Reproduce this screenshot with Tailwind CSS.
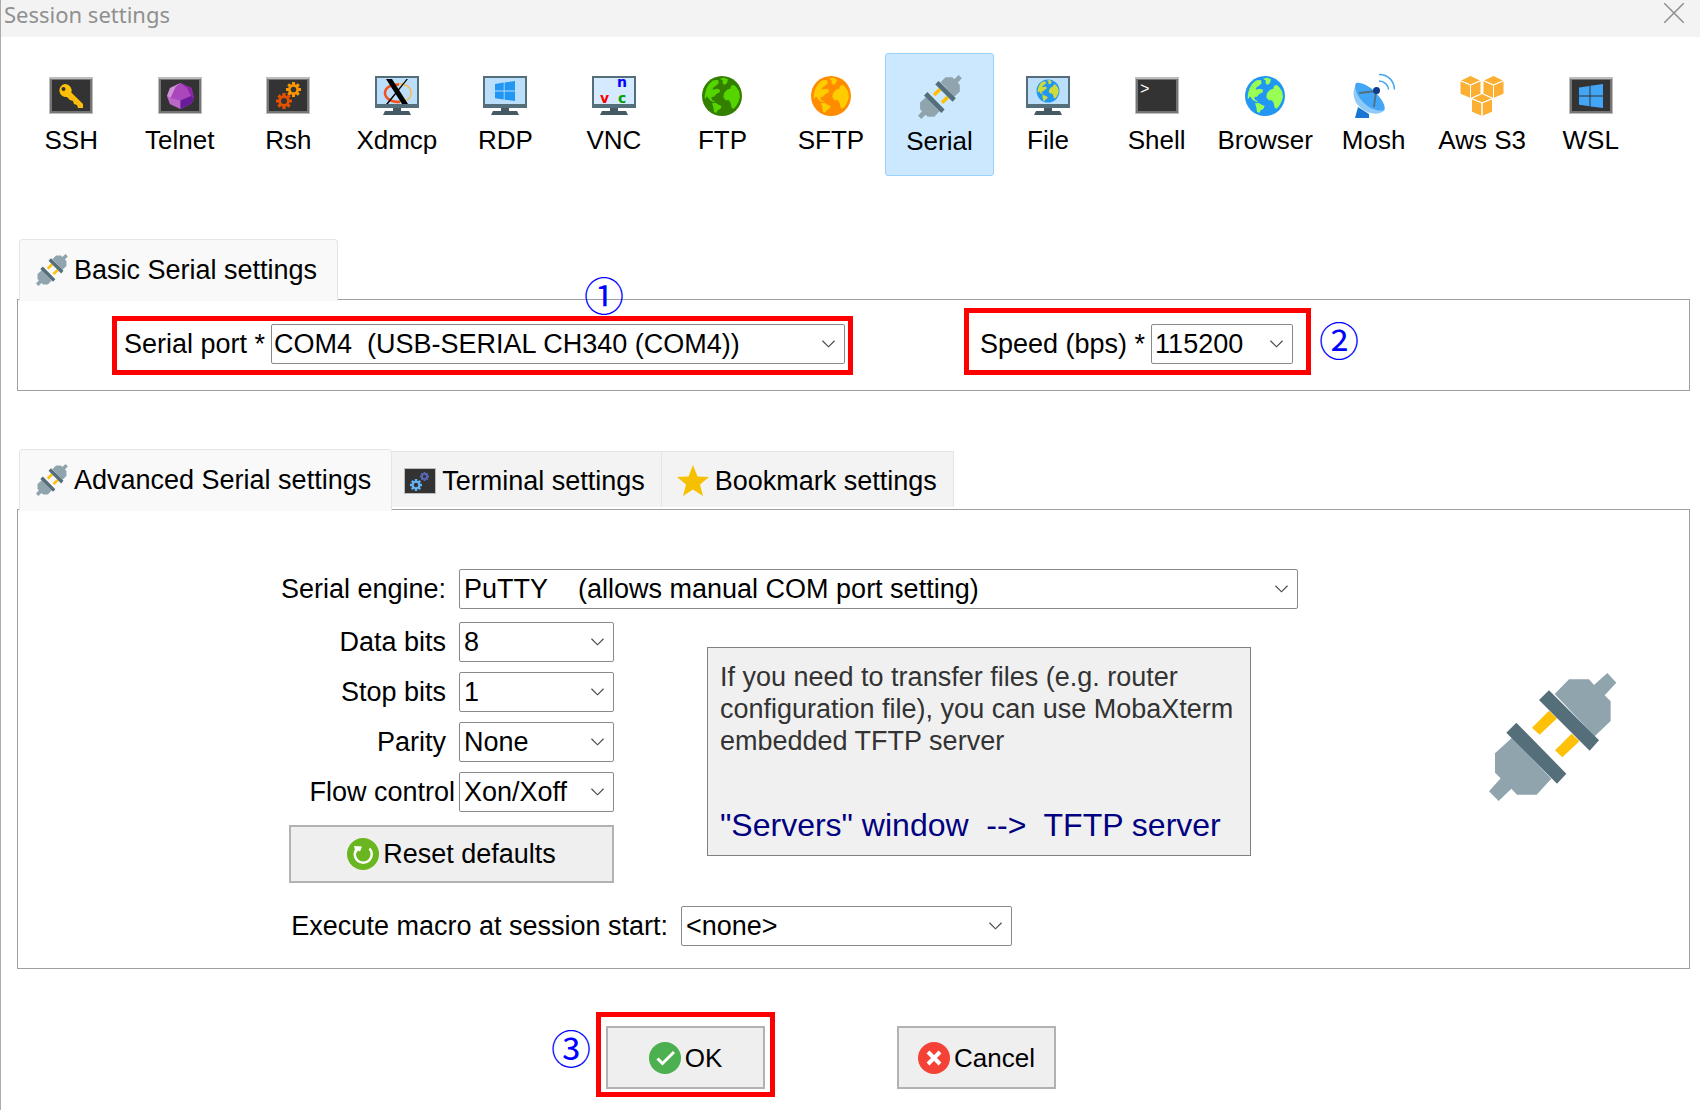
<!DOCTYPE html>
<html lang="en">
<head>
  <meta charset="UTF-8">
  <meta name="viewport" content="width=device-width, initial-scale=1.0">
  <title>Session settings</title>
  <script src="https://cdn.jsdelivr.net/npm/@tailwindcss/browser@4"></script>
</head>
<body class="bg-white min-h-screen border-l border-[#ababab] font-['Liberation_Sans',Arial,sans-serif] text-[27px] leading-8 text-black">

  <!-- Shared icon shapes -->
  <svg class="hidden" aria-hidden="true">
    <symbol id="plug" viewBox="0 0 384 384">
      <path fill="#90a4ae" d="M240 19h60l15 17 40-36 27 29-35 38 18 18v59l-48 46L197 63zM69 194l118 123-44 48H84l-17-18-38 37-29-29 35-39-17-17v-58z"/>
      <path fill="#ffc107" d="M180 113l24 23-52 49-23-21zM248 182l23 23-51 48-22-21z"/>
      <path fill="#546e7a" d="M180 52l150 150-28 31L150 81zM82 149l150 153-28 30L52 179z"/>
    </symbol>
    <symbol id="terminal" viewBox="0 0 48 48">
      <path fill="#bdbdbd" d="M2 5h44v37H2z"/>
      <path fill="#757575" d="M3 7h42v34H3z"/>
      <path fill="#333" d="M5 8h38v31H5z"/>
    </symbol>
    <symbol id="monitor" viewBox="0 0 48 48">
      <path fill="#455a64" d="M20 35h8v4h8l2 4H10l2-4h8z"/>
      <path fill="#546e7a" d="M2 4h44v32H2z"/>
      <path fill="#bbdefb" d="M4 6h40v26H4z"/>
    </symbol>
    <symbol id="land" viewBox="0 0 120 120">
      <path d="M8 62C10 38 22 18 36 13l12-1 2 10-8 7-9 6-1 6 13-3 9 3-1 8-10 5-7 8-8 1 2 9 9 4-3 3-12-6-9-12-6 9zM54 8l12-3 12 5-3 11-7 6-7-6 2-7zM30 82l12-1 8 5 9 4-4 9-8 4-4 8-7-4-2-13zM94 26l8 6 9 14 3 16-4 14-7 13-8 9-6-3-3-14-5-8-10 0-7-9 2-12 9-11 10-3 2-8z"/>
    </symbol>
    <symbol id="gear" viewBox="0 0 20 20">
      <circle cx="10" cy="10" r="5.500" fill="none" stroke="currentColor" stroke-width="3.500"/>
      <path stroke="currentColor" stroke-width="4" d="M10 0v4M10 16v4M0 10h4M16 10h4M3 3l2.500 2.500M14.500 14.500L17 17M17 3l-2.500 2.500M5.500 14.500L3 17"/>
    </symbol>
    <symbol id="windows" viewBox="0 0 24 24">
      <path d="M0 3.5l10.500-1.600v9.600H0zM11.500 1.700L24 0v11.500H11.500zM0 12.500h10.500v9.800L0 20.700zM11.500 12.500H24V24l-12.500-1.600z"/>
    </symbol>
    <symbol id="cube" viewBox="0 0 22 24">
      <path fill="#fbb034" stroke="#fff" d="M11 .5l10.500 5L11 10 .5 5.500zM.5 5.500L11 10v13.500L.5 19zM21.500 5.500L11 10v13.500L21.500 19z"/>
    </symbol>
    <symbol id="chevron" viewBox="0 0 14 8">
      <path d="M.5 .5L7 7l6.500-6.500" fill="none" stroke="#444" stroke-width="1.200"/>
    </symbol>
  </svg>

  <header class="flex h-[37px] items-start justify-between bg-[#f3f3f3] pl-[3px] pr-4">
    <h1 class="font-['Noto_Sans',sans-serif] text-[22px] leading-7 text-[#8f8f8f]">Session settings</h1>
    <button type="button" aria-label="Close" class="pt-[3px]">
      <svg class="size-5" viewBox="0 0 20 20" stroke="#8f8f8f" stroke-width="1.500"><path d="M0 0l20 20M20 0L0 20"/></svg>
    </button>
  </header>

  <!-- Session types -->
  <nav class="mt-4 ml-4 mr-[55px] grid grid-cols-15 text-[26px] leading-7">
    <button type="button" class="flex h-[123px] flex-col items-center gap-1.5 pt-[19px]">
      <svg class="size-12 shrink-0" viewBox="0 0 48 48">
        <use href="#terminal"/>
        <path fill="#ffc107" fill-rule="evenodd" d="M18 12a6.500 6.500 0 0 1 6.300 8.500L36 32v4h-5l-1-3-3-1-1-3-3-1-3-3a6.500 6.500 0 1 1-2-13zm-1.500 3a2 2 0 1 0 0 4 2 2 0 0 0 0-4z"/>
        <path stroke="#f9a825" d="M22 23l12 12"/>
      </svg>
      SSH
    </button>
    <button type="button" class="flex h-[123px] flex-col items-center gap-1.5 pt-[19px]">
      <svg class="size-12 shrink-0" viewBox="0 0 48 48">
        <use href="#terminal"/>
        <path fill="#ab47bc" d="M24.500 11l11 5 2.500 10-3 6-10.500 5L14 32l-3-8 3-8z"/>
        <path fill="#ce93d8" d="M24.500 11l-5 4-5 11-3.500-2 3-8z"/>
        <path fill="#ba68c8" d="M14.500 26l10 2.500V37L14 32l-3-8z"/>
        <path fill="#8e24aa" d="M24.500 11l11 5 2.500 10-3-2-4-8z"/>
        <path fill="#6a1b9a" d="M24.500 28.500L35 24l3 2-3 6-10.500 5z"/>
      </svg>
      Telnet
    </button>
    <button type="button" class="flex h-[123px] flex-col items-center gap-1.5 pt-[19px]">
      <svg class="size-12 shrink-0" viewBox="0 0 48 48">
        <use href="#terminal"/>
        <use href="#gear" x="22" y="10" width="15" height="15" class="text-[#ff9800]"/>
        <use href="#gear" x="12" y="21" width="16" height="16" class="text-[#e65100]"/>
      </svg>
      Rsh
    </button>
    <button type="button" class="flex h-[123px] flex-col items-center gap-1.5 pt-[19px]">
      <svg class="size-12 shrink-0" viewBox="0 0 48 48">
        <use href="#monitor"/>
        <path fill="none" stroke="#ffb74d" stroke-width="1.500" d="M24 12c8-1 14 3 14 9s-6 9-12 9"/>
        <path fill="none" stroke="#f4511e" stroke-width="2.500" d="M26 12.500c-8 0-14 3-14 8.500s6 9 15 9"/>
        <path d="M13 7h6l16 25h-6zM33.500 7H35L15 32h-2z"/>
      </svg>
      Xdmcp
    </button>
    <button type="button" class="flex h-[123px] flex-col items-center gap-1.5 pt-[19px]">
      <svg class="size-12 shrink-0" viewBox="0 0 48 48">
        <use href="#monitor"/>
        <use href="#windows" x="14" y="9" width="20" height="20" fill="#2196f3"/>
      </svg>
      RDP
    </button>
    <button type="button" class="flex h-[123px] flex-col items-center gap-1.5 pt-[19px]">
      <svg class="size-12 shrink-0 font-['DejaVu_Sans',sans-serif] text-[14px] font-bold" viewBox="0 0 48 48">
        <use href="#monitor"/>
        <path fill="#d6eaff" d="M4 6h40v26H4z"/>
        <text x="10" y="31" fill="#f00">v</text>
        <text x="28" y="31" fill="#00a000">c</text>
        <text x="27" y="15" fill="#00f">n</text>
      </svg>
      VNC
    </button>
    <button type="button" class="flex h-[123px] flex-col items-center gap-1.5 pt-[19px]">
      <svg class="size-12 shrink-0" viewBox="0 0 48 48">
        <circle cx="24" cy="24" r="20" fill="#338000"/>
        <use href="#land" x="4" y="4" width="40" height="40" fill="#55d400"/>
      </svg>
      FTP
    </button>
    <button type="button" class="flex h-[123px] flex-col items-center gap-1.5 pt-[19px]">
      <svg class="size-12 shrink-0" viewBox="0 0 48 48">
        <circle cx="24" cy="24" r="20" fill="#ff8c00"/>
        <use href="#land" x="4" y="4" width="40" height="40" fill="#ffcc00"/>
      </svg>
      SFTP
    </button>
    <button type="button" aria-current="true" class="flex h-[123px] flex-col items-center gap-1.5 rounded-[3px] border border-[#99d1ff] bg-[#cce8ff] pt-[19px]">
      <svg class="size-12 shrink-0" viewBox="0 0 48 48"><use href="#plug" x="2" y="2" width="44" height="44"/></svg>
      Serial
    </button>
    <button type="button" class="flex h-[123px] flex-col items-center gap-1.5 pt-[19px]">
      <svg class="size-12 shrink-0" viewBox="0 0 48 48">
        <use href="#monitor"/>
        <circle cx="24" cy="19" r="11.500" fill="#2196f3"/>
        <use href="#land" x="12" y="7" width="24" height="24" fill="#cddc39"/>
      </svg>
      File
    </button>
    <button type="button" class="flex h-[123px] flex-col items-center gap-1.5 pt-[19px]">
      <svg class="size-12 shrink-0 font-['Liberation_Mono',monospace] text-[16px]" viewBox="0 0 48 48">
        <use href="#terminal"/>
        <text x="7" y="22" fill="#fff">&gt;</text>
      </svg>
      Shell
    </button>
    <button type="button" class="flex h-[123px] flex-col items-center gap-1.5 pt-[19px]">
      <svg class="size-12 shrink-0" viewBox="0 0 48 48">
        <circle cx="24" cy="24" r="20" fill="#2196f3"/>
        <use href="#land" x="4" y="4" width="40" height="40" fill="#99ff55"/>
      </svg>
      Browser
    </button>
    <button type="button" class="flex h-[123px] flex-col items-center gap-1.5 pt-[19px]">
      <svg class="size-12 shrink-0" viewBox="0 0 48 48">
        <path fill="#1976d2" d="M8 35l11 7v4H5z"/>
        <path fill="#90caf9" d="M6 12C1 22 4 31 12 37s18 6 23 1z"/>
        <path fill="#42a5f5" d="M6 11c5-1 13 2 21 11 7 8 9 14 7 16-5 2-14-1-21-8S4 14 6 11z"/>
        <path fill="none" stroke="#546e7a" stroke-width="1.800" d="M9 21l17-2-2 16"/>
        <circle cx="26.500" cy="18.500" r="3.500" fill="#0d3c8c"/>
        <path fill="none" stroke="#42a5f5" stroke-width="1.500" d="M29 9c5 0 9 3.500 9.500 8.500M29 2.500c9 0 15 6 15.500 15"/>
      </svg>
      Mosh
    </button>
    <button type="button" class="flex h-[123px] flex-col items-center gap-1.5 pt-[19px]">
      <svg class="size-12 shrink-0" viewBox="0 0 48 48">
        <use href="#cube" x="1" y="3" width="23" height="24"/>
        <use href="#cube" x="24" y="3" width="23" height="24"/>
        <use href="#cube" x="12" y="21" width="24" height="24"/>
      </svg>
      Aws S3
    </button>
    <button type="button" class="flex h-[123px] flex-col items-center gap-1.5 pt-[19px]">
      <svg class="size-12 shrink-0" viewBox="0 0 48 48">
        <use href="#terminal"/>
        <use href="#windows" x="12" y="12" width="24" height="24" fill="#42a5f5"/>
      </svg>
      WSL
    </button>
  </nav>

  <main class="ml-4 mr-[10px]">

    <!-- Basic settings -->
    <section class="mt-[63px]">
      <div role="tablist" class="relative z-10 -mb-[2px] ml-[2px] flex">
        <button type="button" role="tab" aria-selected="true" class="flex h-[62px] items-center gap-1.5 rounded-t-sm border border-b-0 border-[#e5e5e5] bg-[#f9f9f9] pr-5 pb-[2px] pl-4">
          <svg class="size-8"><use href="#plug"/></svg>
          Basic Serial settings
        </button>
      </div>
      <div class="relative flex items-end border border-[#a0a0a0] pt-2 pb-[15px] pl-[94px]">
        <div class="flex w-[741px] items-center border-5 border-[#f00] pt-[3px] pr-[3px] pb-[6px] pl-[7px]">
          <label for="port" class="mr-1.5 whitespace-nowrap">Serial port *</label>
          <div class="relative grow">
            <select id="port" class="block h-10 w-full appearance-none rounded-xs border border-[#8a8a8a] bg-white pl-[2px]">
              <option>COM4&nbsp; (USB-SERIAL CH340 (COM4))</option>
            </select>
            <svg class="pointer-events-none absolute top-4 right-[10px] h-2 w-[13px]"><use href="#chevron"/></svg>
          </div>
        </div>
        <div class="ml-[111px] flex w-[347px] items-center border-5 border-[#f00] pt-[11px] pr-[13px] pb-[6px] pl-[11px]">
          <label for="speed" class="mr-1.5 whitespace-nowrap">Speed (bps) *</label>
          <div class="relative grow">
            <select id="speed" class="block h-10 w-full appearance-none rounded-xs border border-[#8a8a8a] bg-white pl-[3px]">
              <option>115200</option>
            </select>
            <svg class="pointer-events-none absolute top-4 right-[10px] h-2 w-[13px]"><use href="#chevron"/></svg>
          </div>
        </div>
        <span class="mb-4 ml-2 font-['Noto_Sans_CJK_SC',sans-serif] text-[40px] leading-10 text-[#00f]">②</span>
        <span class="absolute -top-[26px] left-[566px] font-['Noto_Sans_CJK_SC',sans-serif] text-[40px] leading-10 text-[#00f]">①</span>
      </div>
    </section>

    <!-- Advanced settings -->
    <section class="mt-[58px]">
      <div role="tablist" class="relative z-10 -mb-[2px] ml-[2px] flex items-start">
        <button type="button" role="tab" aria-selected="true" class="flex h-[62px] items-center gap-1.5 rounded-t-sm border border-b-0 border-[#e5e5e5] bg-[#f9f9f9] pr-5 pb-[2px] pl-4">
          <svg class="size-8"><use href="#plug"/></svg>
          Advanced Serial settings
        </button>
        <button type="button" role="tab" aria-selected="false" class="mt-[2px] flex h-14 items-center gap-1.5 border-t border-r border-[#e5e5e5] bg-[#f3f3f3] pt-[2px] pr-4 pl-3">
          <svg class="h-8 w-8" viewBox="0 0 32 32">
            <path fill="#bdbdbd" d="M0 3h32v26H0z"/>
            <path fill="#333" d="M1 4h30v24H1z"/>
            <use href="#gear" x="6" y="14" width="12" height="12" class="text-[#64b5f6]"/>
            <use href="#gear" x="16" y="7" width="9" height="9" class="text-[#5c6bc0]"/>
          </svg>
          Terminal settings
        </button>
        <button type="button" role="tab" aria-selected="false" class="mt-[2px] flex h-14 items-center gap-1.5 border-t border-r border-[#e5e5e5] bg-[#f3f3f3] pt-[2px] pr-4 pl-[15px]">
          <svg class="size-8" viewBox="0 0 32 32"><path fill="#f4c000" d="M16 0l4.500 11.500L32 12l-9 7.500L26 31l-10-6.500L6 31l3-11.500L0 12l11.500-.5z"/></svg>
          Bookmark settings
        </button>
      </div>

      <div class="border border-[#a0a0a0] pt-[59px] pb-[22px]">
        <div class="flex items-center">
          <label for="engine" class="w-[441px] pr-[13px] text-right">Serial engine:</label>
          <div class="relative w-[839px]">
            <select id="engine" class="block h-10 w-full appearance-none rounded-xs border border-[#8a8a8a] bg-white pl-1">
              <option>PuTTY&nbsp;&nbsp;&nbsp; (allows manual COM port setting)</option>
            </select>
            <svg class="pointer-events-none absolute top-4 right-[10px] h-2 w-[13px]"><use href="#chevron"/></svg>
          </div>
        </div>

        <div class="mt-[13px] flex items-start">
          <div class="flex w-[596px] flex-col gap-[10px]">
            <div class="flex items-center">
              <label for="data-bits" class="w-[441px] pr-[13px] text-right">Data bits</label>
              <div class="relative grow">
                <select id="data-bits" class="block h-10 w-full appearance-none rounded-xs border border-[#8a8a8a] bg-white pl-1">
                  <option>8</option>
                </select>
                <svg class="pointer-events-none absolute top-4 right-[10px] h-2 w-[13px]"><use href="#chevron"/></svg>
              </div>
            </div>
            <div class="flex items-center">
              <label for="stop-bits" class="w-[441px] pr-[13px] text-right">Stop bits</label>
              <div class="relative grow">
                <select id="stop-bits" class="block h-10 w-full appearance-none rounded-xs border border-[#8a8a8a] bg-white pl-1">
                  <option>1</option>
                </select>
                <svg class="pointer-events-none absolute top-4 right-[10px] h-2 w-[13px]"><use href="#chevron"/></svg>
              </div>
            </div>
            <div class="flex items-center">
              <label for="parity" class="w-[441px] pr-[13px] text-right">Parity</label>
              <div class="relative grow">
                <select id="parity" class="block h-10 w-full appearance-none rounded-xs border border-[#8a8a8a] bg-white pl-1">
                  <option>None</option>
                </select>
                <svg class="pointer-events-none absolute top-4 right-[10px] h-2 w-[13px]"><use href="#chevron"/></svg>
              </div>
            </div>
            <div class="flex items-center">
              <label for="flow" class="w-[441px] pr-1 text-right">Flow control</label>
              <div class="relative grow">
                <select id="flow" class="block h-10 w-full appearance-none rounded-xs border border-[#8a8a8a] bg-white pl-1">
                  <option>Xon/Xoff</option>
                </select>
                <svg class="pointer-events-none absolute top-4 right-[10px] h-2 w-[13px]"><use href="#chevron"/></svg>
              </div>
            </div>
            <button type="button" class="mt-[3px] ml-[271px] flex h-[58px] items-center justify-center gap-1 border-2 border-[#b2b2b2] bg-[#efefef]">
              <svg class="size-8" viewBox="0 0 32 32">
                <circle cx="16" cy="16" r="16" fill="#6ab620"/>
                <path fill="none" stroke="#fff" stroke-width="2.500" d="M10 10.500a8.500 8.500 0 1 0 12.500 0"/>
                <path fill="#fff" d="M7 8l8 .5-2 5-2-1-2 3z"/>
              </svg>
              Reset defaults
            </button>
          </div>

          <div class="mt-[25px] ml-[93px] h-[209px] w-[544px] border border-[#808080] bg-[#f0f0f0] pt-[13px] pl-3">
            <p class="text-[#333]">If you need to transfer files (e.g. router<br>configuration file), you can use MobaXterm<br>embedded TFTP server</p>
            <p class="mt-[52px] text-[32px] whitespace-nowrap text-[#000080]">"Servers" window&nbsp; --&gt;&nbsp; TFTP server</p>
          </div>

          <svg class="mt-[51px] mr-[72px] ml-auto size-32"><use href="#plug"/></svg>
        </div>

        <div class="mt-[23px] flex items-center">
          <label for="macro" class="w-[663px] pr-[13px] text-right">Execute macro at session start:</label>
          <div class="relative w-[331px]">
            <select id="macro" class="block h-10 w-full appearance-none rounded-xs border border-[#8a8a8a] bg-white pl-1">
              <option>&lt;none&gt;</option>
            </select>
            <svg class="pointer-events-none absolute top-4 right-[10px] h-2 w-[13px]"><use href="#chevron"/></svg>
          </div>
        </div>
      </div>
    </section>
  </main>

  <footer class="mt-[43px] flex items-end pl-[550px] text-[26px]">
    <span class="mr-[5px] mb-[30px] font-['Noto_Sans_CJK_SC',sans-serif] text-[40px] leading-10 text-[#00f]">③</span>
    <div class="border-5 border-[#f00] px-[5px] pt-[9px] pb-[3px]">
      <button type="button" class="flex h-[63px] w-[159px] items-center justify-center gap-1 border-2 border-[#b2b2b2] bg-[#efefef]">
        <svg class="size-8" viewBox="0 0 32 32">
          <circle cx="16" cy="16" r="16" fill="#4caf50"/>
          <path fill="none" stroke="#fff" stroke-width="3" d="M8.500 16.500l5 5L25 10"/>
        </svg>
        OK
      </button>
    </div>
    <button type="button" class="mb-2 ml-[122px] flex h-[63px] w-[159px] items-center justify-center gap-1 border-2 border-[#b2b2b2] bg-[#efefef]">
      <svg class="size-8" viewBox="0 0 32 32">
        <circle cx="16" cy="16" r="16" fill="#f44336"/>
        <path stroke="#fff" stroke-width="4" d="M10 10l12 12M22 10L10 22"/>
      </svg>
      Cancel
    </button>
  </footer>

</body>
</html>
